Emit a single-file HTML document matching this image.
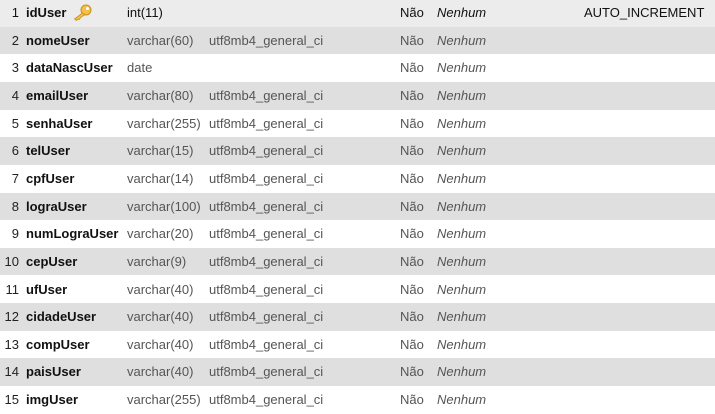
<!DOCTYPE html><html><head><style>
body{margin:0;width:715px;height:410px;overflow:hidden;background:#fff;font-family:"Liberation Sans",Arial,sans-serif;font-size:13px}
.r{position:absolute;left:0;width:715px;height:27.65px;line-height:28px;color:#444}
.r.g{background:#dfdfdf}
.r span{position:absolute;white-space:nowrap}
.n{right:696px;color:#222}
.c{left:26px;font-weight:bold;color:#111}
.t{left:127px;color:#555}
.o{left:209px;color:#555}
.nao{left:400px;color:#555}
.nh{left:437px;font-style:italic;color:#555}
.first{background:#ececec}
.first span{color:#111}
</style></head><body>
<div class="r first" style="top:-1px"><span class="n">1</span><span class="c">idUser</span>
<svg style="position:absolute;left:73px;top:5px" width="19" height="17" viewBox="0 0 19 17"><circle cx="13" cy="6" r="5" fill="#f3c14a" stroke="#c8901e"/><circle cx="14.5" cy="4.5" r="1.5" fill="#fff"/><path d="M9.5 9 L1.5 15 L3.5 16.5 L5 15 L6.5 15.5 L7.5 13.5 L12 10.5Z" fill="#f3c14a" stroke="#c8901e" stroke-width=".8"/></svg>
<span class="t">int(11)</span><span class="nao">Não</span><span class="nh">Nenhum</span><span style="left:584px">AUTO_INCREMENT</span></div>
<div class="r g" style="top:26.65px"><span class="n">2</span><span class="c">nomeUser</span><span class="t">varchar(60)</span><span class="o">utf8mb4_general_ci</span><span class="nao">Não</span><span class="nh">Nenhum</span></div>
<div class="r" style="top:54.3px"><span class="n">3</span><span class="c">dataNascUser</span><span class="t">date</span><span class="nao">Não</span><span class="nh">Nenhum</span></div>
<div class="r g" style="top:81.95px"><span class="n">4</span><span class="c">emailUser</span><span class="t">varchar(80)</span><span class="o">utf8mb4_general_ci</span><span class="nao">Não</span><span class="nh">Nenhum</span></div>
<div class="r" style="top:109.6px"><span class="n">5</span><span class="c">senhaUser</span><span class="t">varchar(255)</span><span class="o">utf8mb4_general_ci</span><span class="nao">Não</span><span class="nh">Nenhum</span></div>
<div class="r g" style="top:137.25px"><span class="n">6</span><span class="c">telUser</span><span class="t">varchar(15)</span><span class="o">utf8mb4_general_ci</span><span class="nao">Não</span><span class="nh">Nenhum</span></div>
<div class="r" style="top:164.9px"><span class="n">7</span><span class="c">cpfUser</span><span class="t">varchar(14)</span><span class="o">utf8mb4_general_ci</span><span class="nao">Não</span><span class="nh">Nenhum</span></div>
<div class="r g" style="top:192.55px"><span class="n">8</span><span class="c">lograUser</span><span class="t">varchar(100)</span><span class="o">utf8mb4_general_ci</span><span class="nao">Não</span><span class="nh">Nenhum</span></div>
<div class="r" style="top:220.2px"><span class="n">9</span><span class="c">numLograUser</span><span class="t">varchar(20)</span><span class="o">utf8mb4_general_ci</span><span class="nao">Não</span><span class="nh">Nenhum</span></div>
<div class="r g" style="top:247.85px"><span class="n">10</span><span class="c">cepUser</span><span class="t">varchar(9)</span><span class="o">utf8mb4_general_ci</span><span class="nao">Não</span><span class="nh">Nenhum</span></div>
<div class="r" style="top:275.5px"><span class="n">11</span><span class="c">ufUser</span><span class="t">varchar(40)</span><span class="o">utf8mb4_general_ci</span><span class="nao">Não</span><span class="nh">Nenhum</span></div>
<div class="r g" style="top:303.15px"><span class="n">12</span><span class="c">cidadeUser</span><span class="t">varchar(40)</span><span class="o">utf8mb4_general_ci</span><span class="nao">Não</span><span class="nh">Nenhum</span></div>
<div class="r" style="top:330.8px"><span class="n">13</span><span class="c">compUser</span><span class="t">varchar(40)</span><span class="o">utf8mb4_general_ci</span><span class="nao">Não</span><span class="nh">Nenhum</span></div>
<div class="r g" style="top:358.45px"><span class="n">14</span><span class="c">paisUser</span><span class="t">varchar(40)</span><span class="o">utf8mb4_general_ci</span><span class="nao">Não</span><span class="nh">Nenhum</span></div>
<div class="r" style="top:386.1px"><span class="n">15</span><span class="c">imgUser</span><span class="t">varchar(255)</span><span class="o">utf8mb4_general_ci</span><span class="nao">Não</span><span class="nh">Nenhum</span></div>
</body></html>
